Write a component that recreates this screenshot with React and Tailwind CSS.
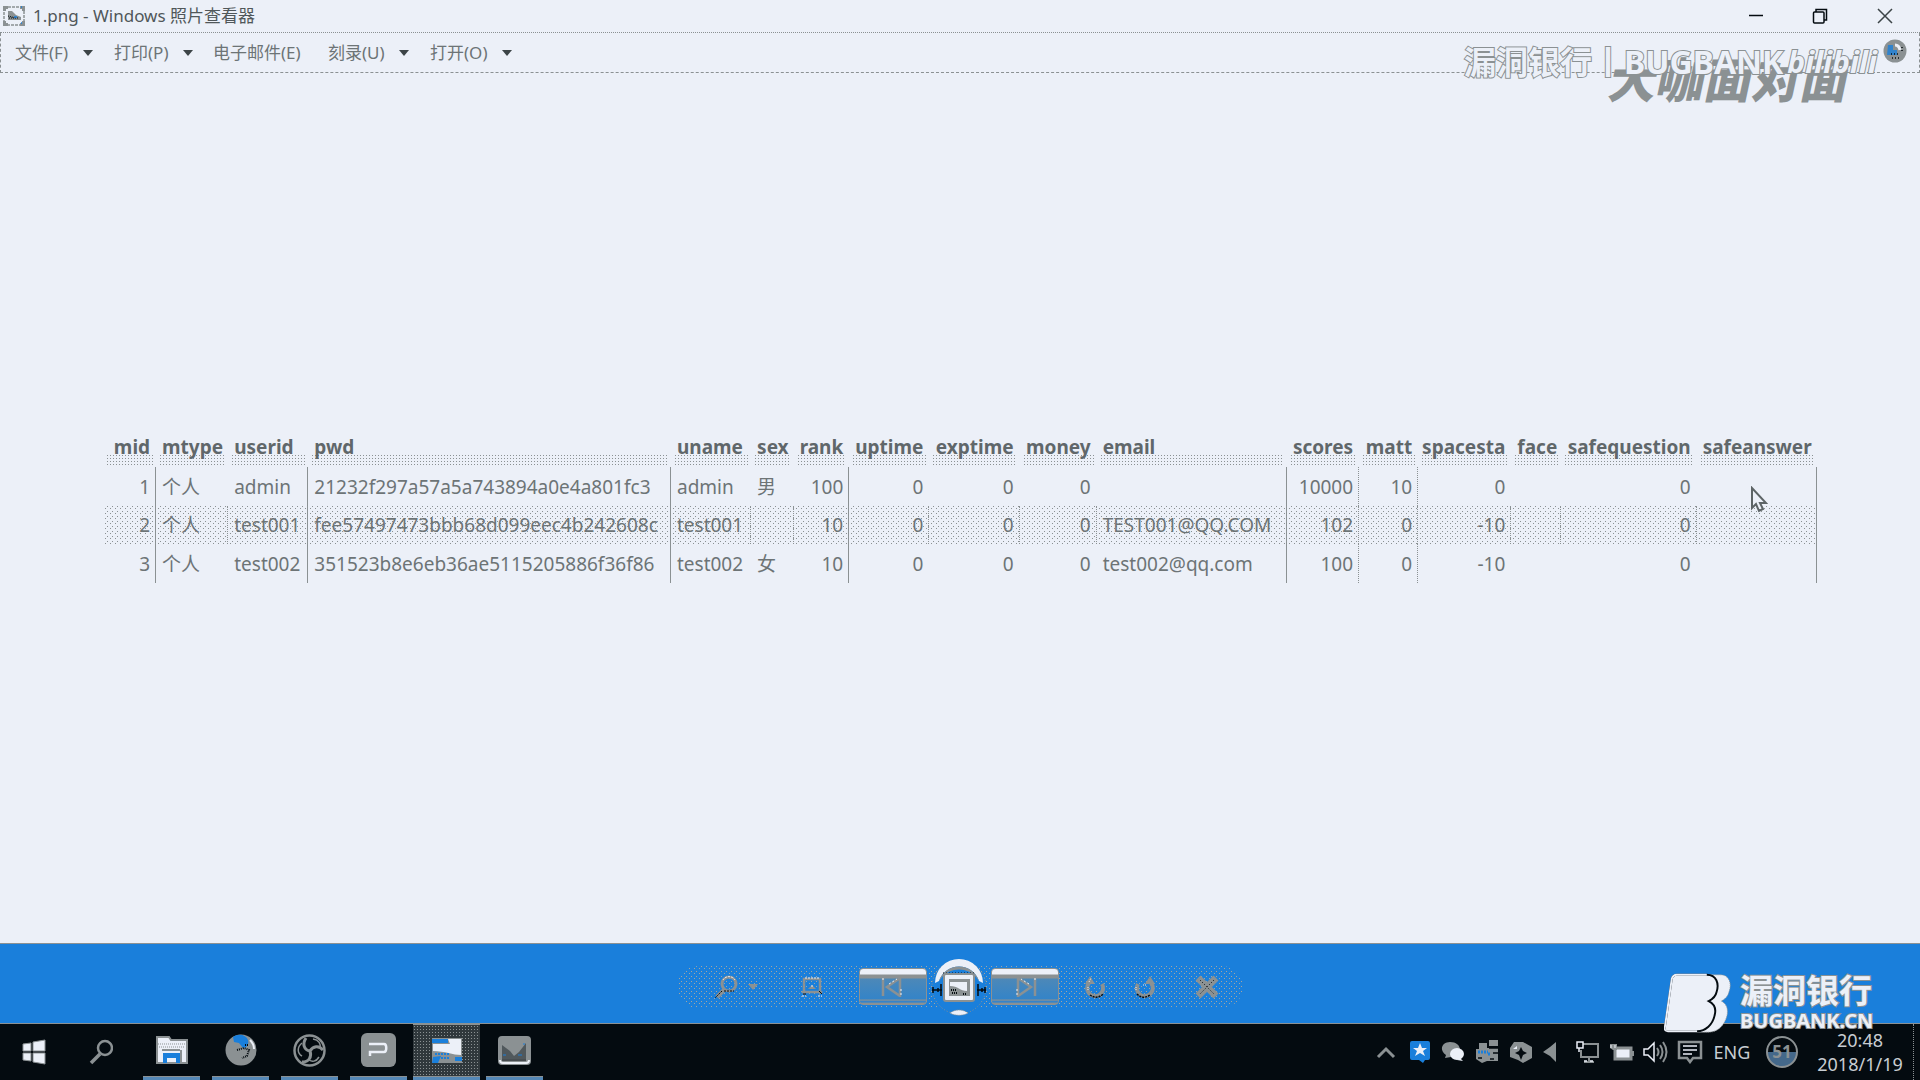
import React from "react";

const FONT = "font-['Noto_Sans','Noto_Sans_CJK_SC',sans-serif]";
const DOTS =
  "bg-[radial-gradient(circle,#8b9193,transparent_1px),radial-gradient(circle,#8b9193,transparent_1px)] bg-[length:5px_5px] bg-[position:0_0,2px_3px]";
const PILL_DOTS =
  "bg-[radial-gradient(circle,#a3a5a2,transparent_1px),radial-gradient(circle,#a3a5a2,transparent_1px)] bg-[length:5px_5px] bg-[position:0_0,2px_3px]";
const DENSE =
  "bg-[radial-gradient(circle,#8b9193,transparent_1px)] bg-[length:3px_3px]";
const G = "#8b9193";
const W = "#ecf0f8";
const B = "#1a7fdb";
const K = "#040b10";

const columns = [
  { name: "mid", w: 53, right: true },
  { name: "mtype", w: 72 },
  { name: "userid", w: 80 },
  { name: "pwd", w: 362 },
  { name: "uname", w: 80 },
  { name: "sex", w: 43 },
  { name: "rank", w: 55, right: true },
  { name: "uptime", w: 80, right: true },
  { name: "exptime", w: 90, right: true },
  { name: "money", w: 77, right: true },
  { name: "email", w: 190 },
  { name: "scores", w: 72, right: true },
  { name: "matt", w: 59, right: true },
  { name: "spacesta", w: 93, right: true },
  { name: "face", w: 50 },
  { name: "safequestion", w: 135, right: true },
  { name: "safeanswer", w: 120 },
];
const total = columns.reduce((s, c) => s + c.w, 0);

const rows = [
  ["1", "个人", "admin", "21232f297a57a5a743894a0e4a801fc3", "admin", "男", "100", "0", "0", "0", "", "10000", "10", "0", "", "0", ""],
  ["2", "个人", "test001", "fee57497473bbb68d099eec4b242608c", "test001", "", "10", "0", "0", "0", "TEST001@QQ.COM", "102", "0", "-10", "", "0", ""],
  ["3", "个人", "test002", "351523b8e6eb36ae5115205886f36f86", "test002", "女", "10", "0", "0", "0", "test002@qq.com", "100", "0", "-10", "", "0", ""],
];
const solid = [0, 3, 6, 10, 16];
const dotted = [11, 12];

function cellBorder(r, c) {
  if (solid.includes(c)) return "border-r border-solid border-[#8b9193]";
  if (dotted.includes(c) || (r === 1 && c !== 2)) return "border-r border-dotted border-[#8b9193]";
  if (c === 2) return "border-r border-solid border-[#8b9193]";
  return "border-r border-transparent";
}

function TitleBar() {
  return (
    <header className="flex h-[33px] items-center border-b border-dotted border-[#8b9193]">
      <svg className="ml-[3px] h-[20px] w-[22px]" viewBox="0 0 22 20" fill="none">
        <rect x="1" y="1" width="20" height="18" stroke={G} strokeWidth="1.5" strokeDasharray="3 1" />
        <path d="M0 0h5v3H3v2H0zM17 0h5v5h-3V3h-2zM0 15h3v2h2v3H0zM19 15h3v5h-5v-3h2z" fill={G} />
        <path d="M5 5h4l4 4 5 2v3H5z" fill={G} />
        <path d="M5 10l8 2M6 12h9" stroke={K} strokeDasharray="1 1" />
        <path d="M18 1h1M18 17h1M11 11h3" stroke={B} strokeWidth="1.5" />
      </svg>
      <h1 className="ml-[8px] flex-1 text-[17px] leading-6 text-[#50575a]">1.png - Windows 照片查看器</h1>
      <button aria-label="Minimize" className="flex h-8 w-16 items-center justify-center">
        <svg className="h-4 w-4" viewBox="0 0 16 16"><path d="M1 7.5h14" stroke={K} strokeWidth="1.5" /></svg>
      </button>
      <button aria-label="Restore" className="flex h-8 w-16 items-center justify-center">
        <svg className="h-4 w-4" viewBox="0 0 16 16" fill="none" stroke={K}>
          <rect x="1.5" y="4" width="10.5" height="11" rx="1" strokeWidth="1.5" />
          <path d="M4 4V1.5h10.500V12H12" strokeWidth="1.5" />
        </svg>
      </button>
      <button aria-label="Close" className="mr-[2px] flex h-8 w-[66px] items-center justify-center">
        <svg className="h-4 w-4" viewBox="0 0 16 16"><path d="M1 1l14 14M15 1L1 15" stroke="#3c4447" strokeWidth="1.5" /></svg>
      </button>
    </header>
  );
}

function MenuItem({ label, arrow, className }) {
  return (
    <button className={"flex items-center whitespace-nowrap " + className}>
      <span className="flex-1 text-left">{label}</span>
      {arrow && (
        <svg className="h-[6px] w-[10px]" viewBox="0 0 10 6"><path d="M0 0h10L5 6z" fill="#3c4447" /></svg>
      )}
    </button>
  );
}

function MenuBar() {
  return (
    <nav className="flex h-[40px] items-center border-x border-b border-dashed border-[#8b9193] pl-[14px] text-[17px] leading-6 text-[#6d7476]">
      <MenuItem label="文件(F)" arrow className="mr-[21px] w-[78px]" />
      <MenuItem label="打印(P)" arrow className="mr-[20px] w-[79px]" />
      <MenuItem label="电子邮件(E)" className="mr-[21px] w-[94px]" />
      <MenuItem label="刻录(U)" arrow className="mr-[21px] w-[81px]" />
      <MenuItem label="打开(O)" arrow className="w-[82px]" />
      <button aria-label="Help" className="mr-[12px] mb-[4px] ml-auto">
        <svg className="h-[24px] w-[24px]" viewBox="0 0 24 24">
          <circle cx="12" cy="12" r="11.5" fill={G} />
          <path d="M5 6h5v5h4v5H4z" fill={B} opacity="0.8" />
          <path d="M12 6q4 0 5 5" stroke={W} strokeWidth="3" fill="none" />
          <path d="M9 19h8M8 15h9M19 8v6" stroke={K} strokeWidth="1.5" strokeDasharray="1 2" />
        </svg>
      </button>
    </nav>
  );
}

function Watermark() {
  return (
    <div className="pointer-events-none absolute top-[40px] right-[36px] h-[70px] w-[420px] whitespace-nowrap">
      <div className="absolute top-[10px] left-[146px] -skew-x-12 text-[48px] leading-[60px] font-black text-[#8b9193]">大咖面对面</div>
      <div className="absolute top-[2px] left-0 flex items-center text-[32px] leading-[40px] font-bold text-[#ecf0f8] [paint-order:stroke] [-webkit-text-stroke:2px_#8b9193]">
        <span>漏洞银行丨BUGBANK</span>
        <span className="ml-1 text-[30px] italic">bilibili</span>
      </div>
    </div>
  );
}

function DataTable() {
  return (
    <table className="w-full table-fixed border-separate border-spacing-0 text-[19px] leading-6 text-[#6d7476]">
      <colgroup>
        {columns.map((c) => (
          <col key={c.name} style={{ width: `${(c.w / total) * 100}%` }} />
        ))}
      </colgroup>
      <thead>
        <tr className="h-[34px]">
          {columns.map((c) => (
            <th key={c.name} scope="col" className={"relative p-0 pt-[2px] align-top font-bold whitespace-nowrap text-[#60676a] " + (c.right ? "pr-[6px] text-right" : "pl-[6px] text-left")}>
              <span className={"absolute inset-x-[3px] bottom-px h-[12px] " + DENSE} />
              <span className="relative">{c.name}</span>
            </th>
          ))}
        </tr>
      </thead>
      <tbody>
        {rows.map((row, r) => (
          <tr key={row[0]} className={r === 1 ? "h-[38px]" : "h-[39px]"}>
            {row.map((v, c) => (
              <td key={c} className={"p-0 whitespace-nowrap " + (columns[c].right ? "pr-[5px] text-right " : "pl-[6px] ") + cellBorder(r, c) + (r === 1 ? " " + DOTS : "")}>
                {v}
              </td>
            ))}
          </tr>
        ))}
      </tbody>
    </table>
  );
}

function SideButton({ label, children }) {
  return (
    <button aria-label={label} className="flex h-[37px] flex-1 items-center justify-center rounded-[4px] border border-[#8b9193] bg-[linear-gradient(#ecf0f8_0,#ecf0f8_5px,#8b9193_6px,#8b9193_9px,#4c88b8_10px,#3484c8_30px,#8b9193_31px,#1a7fdb_33px,#8b9193_34px)]">
      {children}
    </button>
  );
}

function Controls() {
  return (
    <div className="flex h-[81px] items-center justify-center border-y border-[#8b9193] bg-[#1a7fdb]">
      <div className={"mt-[6px] flex h-[42px] w-[566px] items-center rounded-full " + PILL_DOTS}>
        <button aria-label="Zoom" className="ml-[36px] flex w-[84px] items-center gap-[8px]">
          <svg className="h-[24px] w-[26px]" viewBox="0 0 26 24" fill="none">
            <circle cx="16" cy="9" r="7" stroke={G} strokeWidth="3" />
            <path d="M10 5a7 7 0 0112 0" stroke={W} strokeDasharray="2 1" />
            <path d="M11 15l-7 7" stroke={G} strokeWidth="4" />
            <path d="M9 16l-7 7M11 16h10" stroke={K} strokeDasharray="2 1" />
          </svg>
          <svg className="h-[8px] w-[12px]" viewBox="0 0 12 8"><path d="M1 1h10L6 7z" fill={G} /></svg>
        </button>
        <button aria-label="Fit to window" className="ml-[3px] flex w-[24px] justify-center">
          <svg className="h-[22px] w-[24px]" viewBox="0 0 24 22" fill="none">
            <rect x="4" y="3" width="16" height="13" stroke={G} strokeWidth="2.5" />
            <path d="M8 13l4-4 4 4zM1 16l4-3v6zM23 16l-4-3v6z" fill={G} />
            <path d="M5 2h14M11 10h2M2 20h4M18 20h4" stroke={W} strokeDasharray="2 1" />
            <path d="M3 18h3M19 15l3 3" stroke={K} />
          </svg>
        </button>
        <div className="ml-[35px] flex w-[200px] items-center gap-[3px]">
          <SideButton label="Previous">
            <svg className="h-[20px] w-[24px]" viewBox="0 0 24 20" fill="none">
              <path d="M2 1v18M6 10L19 1v18z" stroke={G} strokeWidth="2.5" />
              <path d="M2 1v4M8 7l8-5M20 12v6" stroke={W} strokeDasharray="2 2" />
            </svg>
          </SideButton>
          <button aria-label="Play slide show" className="relative flex h-[58px] w-[58px] items-center justify-center">
            <svg className="h-[62px] w-[58px] shrink-0" viewBox="0 0 58 62" fill="none">
              <circle cx="29" cy="31" r="27" fill={B} stroke={G} strokeDasharray="1 2" />
              <path d="M5 27A24 24 0 0153 27L49 25A21 21 0 009 25z" fill={W} />
              <path d="M9 25A21 21 0 0149 25L46 21A21 18 0 0012 21z" fill={G} />
              <path d="M13 17h32" stroke={K} strokeDasharray="1 2" />
              <path d="M2 34h10M3 31v6M8 32v4M11 28v12M47 34h9M48 28v12M52 32v4M55 31v6" stroke={K} strokeWidth="1.5" />
              <rect x="14" y="18" width="30" height="27" rx="2" fill={W} stroke={G} strokeWidth="2" />
              <rect x="19" y="23" width="21" height="17" fill={G} />
              <path d="M20 26h17v9c-7 0-9-5-17-5z" fill={W} />
              <path d="M21 34h5M22 37h5M33 38h4" stroke={K} strokeDasharray="1 1" strokeWidth="2" />
              <path d="M20 57c5-4 13-4 18 0-5 3-13 3-18 0z" fill={W} stroke={G} strokeDasharray="1 1" />
            </svg>
          </button>
          <SideButton label="Next">
            <svg className="h-[20px] w-[24px]" viewBox="0 0 24 20" fill="none">
              <path d="M22 1v18M18 10L5 1v18z" stroke={G} strokeWidth="2.5" />
              <path d="M22 1v4M16 7L8 2M4 12v6" stroke={W} strokeDasharray="2 2" />
            </svg>
          </SideButton>
        </div>
        <button aria-label="Rotate counterclockwise" className="ml-[26px]">
          <svg className="h-[24px] w-[22px]" viewBox="0 0 22 24" fill="none">
            <path d="M4 8a8 8 0 1013 1" stroke={G} strokeWidth="4" />
            <path d="M0 9l5-8 5 8z" fill={G} />
            <path d="M5 20c4 3 9 3 13-1" stroke={K} strokeDasharray="2 1" strokeWidth="1.5" />
            <path d="M4 7l2-4M3 12v3" stroke={W} strokeDasharray="1 1" />
          </svg>
        </button>
        <button aria-label="Rotate clockwise" className="ml-[26px]">
          <svg className="h-[24px] w-[22px]" viewBox="0 0 22 24" fill="none">
            <path d="M18 8A8 8 0 115 9" stroke={G} strokeWidth="4" />
            <path d="M22 9l-5-8-5 8z" fill={G} />
            <path d="M4 19c4 4 9 4 13 1" stroke={K} strokeDasharray="2 1" strokeWidth="1.5" />
            <path d="M3 12v4M10 10h4" stroke={W} strokeDasharray="1 1" />
          </svg>
        </button>
        <button aria-label="Delete" className="ml-[40px]">
          <svg className="h-[24px] w-[24px]" viewBox="0 0 24 24" fill="none">
            <path d="M3 3l18 18M21 3L3 21" stroke={G} strokeWidth="7" />
            <path d="M5 5l14 14M19 5L5 19" stroke={K} strokeDasharray="1 2" />
          </svg>
        </button>
      </div>
    </div>
  );
}

function Brand() {
  return (
    <div className="pointer-events-none absolute right-[45px] bottom-[46px] flex items-start whitespace-nowrap">
      <svg className="h-[62px] w-[70px]" viewBox="0 0 72 62">
        <path d="M46 2h12c9 0 12 9 9 17-1 5-4 8-8 10 5 3 7 7 6 14-2 10-9 18-19 18H34z" fill={W} stroke={G} strokeDasharray="1 1" />
        <path d="M13 2h31c10 0 13 9 10 18-1 5-4 7-8 9 6 3 8 8 6 15-2 9-9 16-18 16H4c-3 0-4-2-3-5L8 6c1-3 2-4 5-4z" fill={W} stroke={K} strokeWidth="2" />
        <path d="M34 60H4c-3 0-4-2-3-5L8 6c1-3 2-4 5-4h31" fill="none" stroke={W} strokeWidth="2" />
      </svg>
      <div className="ml-[6px] w-[135px] font-bold text-[#ecf0f8] [paint-order:stroke] [-webkit-text-stroke:2px_#8b9193]">
        <div className="text-[33px] leading-[38px]">漏洞银行</div>
        <div className="text-[20px] leading-[22px]">BUGBANK.CN</div>
      </div>
    </div>
  );
}

function Task({ label, active, running = true, children }) {
  return (
    <button
      aria-label={label}
      className={
        "flex h-[56px] flex-col items-center justify-between " +
        (active ? "w-[67px] border-t border-[#8b9193] bg-[#30383c] bg-[radial-gradient(circle,#8b9193,transparent_1px)] bg-[length:3px_3px]" : "w-[57px]")
      }
    >
      <span className={"flex items-center " + (active ? "h-[50px]" : "h-[52px]")}>{children}</span>
      <span className={"h-[4px] w-full " + (running ? "border-t border-[#8b9193] bg-[#5488b7]" : "")} />
    </button>
  );
}

function TaskBar() {
  return (
    <footer className="flex h-[56px] items-center bg-[#040b10] text-[#c8cdd2]">
      <button aria-label="Start" className="ml-[22px]">
        <svg className="h-[26px] w-[24px]" viewBox="0 0 24 26" stroke={G} fill={W}>
          <path d="M1 5l8-1v8H1zM11 3l12-2v11H11zM1 14h8v8l-8-1zM11 14h12v11l-12-2z" />
        </svg>
      </button>
      <button aria-label="Search" className="ml-[43px]">
        <svg className="h-[26px] w-[24px]" viewBox="0 0 24 26" fill="none" stroke={G}>
          <circle cx="16" cy="9" r="7" strokeWidth="2.5" /><path d="M11 15L2 24" strokeWidth="3.5" />
        </svg>
      </button>
      <div className="ml-[30px] flex items-center gap-[12px]">
        <Task label="File Explorer">
          <svg className="h-[28px] w-[32px]" viewBox="0 0 32 28">
            <path d="M1 1h12l2 3h16v23H1z" fill={W} stroke={G} strokeWidth="2" />
            <path d="M2 8h28M3 11h26" stroke={G} strokeDasharray="1 1" />
            <path d="M7 27V17h17v10h-4v-5h-9v5z" fill={B} /><path d="M25 14v13M6 14h18" stroke={G} strokeWidth="2" />
          </svg>
        </Task>
        <Task label="Firefox">
          <svg className="h-[32px] w-[32px]" viewBox="0 0 32 32">
            <circle cx="16" cy="16" r="15.5" fill={G} />
            <path d="M8 3c6-4 13-2 15 3 1 4-1 8-5 8l-4-5-5-1z" fill={B} />
            <path d="M12 16l7-2 5 2-2 6-5 2M20 11h4" stroke={K} strokeDasharray="1 1" strokeWidth="2" fill="none" />
            <path d="M25 6c3 3 4 6 4 9" stroke={W} strokeWidth="2" fill="none" />
          </svg>
        </Task>
        <Task label="OBS Studio">
          <svg className="h-[33px] w-[33px]" viewBox="0 0 33 33" fill="none" stroke={G}>
            <circle cx="16.5" cy="16.5" r="15" strokeWidth="2.5" />
            <path d="M17 17c-6-1-8-7-4-13M17 17c3-5 9-6 13-1M17 17c2 6-1 11-8 11" strokeWidth="3" />
            <path d="M9 9c-5 4-5 10 0 13M20 5c6 1 8 5 7 9M26 23c-3 5-7 5-10 3" strokeWidth="1.5" />
          </svg>
        </Task>
        <Task label="Presentation">
          <svg className="h-[34px] w-[35px]" viewBox="0 0 35 34">
            <rect width="35" height="34" rx="6" fill={G} />
            <path d="M8 11h15c3 0 3 8 0 8H9v4" fill="none" stroke={W} strokeWidth="2.5" />
          </svg>
        </Task>
        <div className="-mx-[6px]">
          <Task label="Windows Photo Viewer" active>
            <svg className="h-[27px] w-[32px]" viewBox="0 0 32 27">
              <rect x="1" y="1" width="30" height="25" fill={G} />
              <path d="M2 7h17l-2-5h13v16c-8 0-16-4-28-4z" fill={W} />
              <path d="M1 2h16v4H1zM2 20l8-1-3 7H1zM24 20h7v4h-7z" fill={B} />
              <path d="M4 17h14M10 21h9" stroke={B} strokeDasharray="2 1" strokeWidth="2" />
            </svg>
          </Task>
        </div>
        <Task label="Monitor">
          <svg className="h-[29px] w-[33px]" viewBox="0 0 33 29">
            <rect width="33" height="29" rx="4" fill={G} />
            <path d="M4 9l8 6 4 5 5-4 7-9v16H4z" fill="#50585c" />
            <path d="M4 24h24" stroke={K} />
            <path d="M2 24c0 2 1 3 3 3h23c2 0 3-1 3-3" fill="none" stroke={W} strokeWidth="2" />
            <path d="M5 19h3M25 8h2M20 19h4" stroke={B} />
          </svg>
        </Task>
      </div>
      <div className="mr-[6px] ml-auto flex items-center">
        <button aria-label="Show hidden icons" className="mr-[13px]">
          <svg className="h-[14px] w-[20px]" viewBox="0 0 20 14" fill="none" stroke={G} strokeWidth="3"><path d="M2 12l8-8 8 8" /></svg>
        </button>
        <div className="mr-[20px] flex items-center gap-[10px]">
          <svg className="h-[24px] w-[22px]" viewBox="0 0 22 24">
            <path d="M3 1h16q2 0 2 2v15q0 2-2 2h-3l-2 3-4-3H3q-2 0-2-2V3q0-2 2-2z" fill={B} />
            <path d="M11 3l2 5h5l-4 3 2 5-5-3-5 3 2-5-4-3h5z" fill={W} />
          </svg>
          <svg className="h-[20px] w-[24px]" viewBox="0 0 24 20">
            <path d="M9 0c6 0 10 3 10 8s-4 7-9 7l-6 1 1-3C-3 7 2 0 9 0z" fill={G} />
            <ellipse cx="16" cy="12" rx="7" ry="6" fill={W} /><path d="M19 16l3 3-6-1z" fill={W} />
          </svg>
          <svg className="h-[24px] w-[24px]" viewBox="0 0 24 24">
            <path d="M4 3h8v5h11v13H12l-5 2-6-4V9h3zM14 0h9v6h-9z" fill={G} />
            <path d="M3 12h10M13 14h3" stroke={B} strokeWidth="3" strokeDasharray="2 1" />
            <path d="M3 18h4M14 8h9M15 19h4M18 13h5" stroke={K} strokeWidth="1.5" />
          </svg>
          <svg className="h-[23px] w-[24px]" viewBox="0 0 24 23">
            <path d="M5 1h9l9 5v11l-9 5-5-3-8-3V7z" fill={G} />
            <path d="M12 6l2 4 4 2-4 2-2 5-2-5-4-2 4-2z" fill={K} />
            <path d="M4 8l4-3v3z" fill={W} />
          </svg>
          <svg className="h-[20px] w-[13px]" viewBox="0 0 13 20"><path d="M13 0v20L7 14 0 10l7-5z" fill={G} /></svg>
        </div>
        <div className="mr-[10px] flex items-center gap-[9px]">
          <svg className="h-[22px] w-[24px]" viewBox="0 0 24 22" fill="none" stroke={W}>
            <path d="M7 3h15v13H5V9M13 16v4M8 21h10" stroke={G} strokeWidth="2" />
            <path d="M1 1h6v6H1zM3 7v4M8 20h3M14 20h3" strokeWidth="1.5" />
          </svg>
          <svg className="h-[18px] w-[25px]" viewBox="0 0 25 18">
            <rect x="6" y="5" width="16" height="11" fill={W} stroke={G} strokeWidth="3" />
            <path d="M22 8h3v5h-3zM1 1h7v6H4L1 5z" fill={G} /><path d="M2 2v3M6 2v3" stroke={W} />
          </svg>
          <svg className="h-[22px] w-[25px]" viewBox="0 0 25 22" fill="none" stroke={G} strokeWidth="2">
            <path d="M1 8h4l6-6v18l-6-6H1z" stroke={W} strokeWidth="1.5" />
            <path d="M14 7q3 4 0 8M17 4q5 7 0 14M20 1q7 10 0 20" />
          </svg>
          <svg className="h-[24px] w-[26px]" viewBox="0 0 26 24" fill="none">
            <path d="M2 2h22v16h-8l-3 4-3-4H2z" stroke={G} strokeWidth="2.5" />
            <path d="M6 6h14M6 10h14M6 14h9" stroke={W} strokeWidth="1.5" />
          </svg>
        </div>
        <button className="mr-[15px] w-[38px] text-[18px] leading-6">ENG</button>
        <div className="mr-[18px] flex h-[32px] w-[32px] items-center justify-center rounded-full border-2 border-[#8b9193] bg-[linear-gradient(#040b10_50%,#44688a_50%)] text-[17px] font-bold text-[#8b9193]">51</div>
        <div className="w-[88px] text-center text-[18px] leading-[24px] whitespace-nowrap">
          <div>20:48</div>
          <div>2018/1/19</div>
        </div>
        <div className="ml-[9px] h-[56px] border-l border-dotted border-[#8b9193]" />
      </div>
    </footer>
  );
}

export default function App() {
  return (
    <div className={"relative flex min-h-screen flex-col overflow-hidden bg-[#ecf0f8] " + FONT}>
      <TitleBar />
      <MenuBar />
      <Watermark />
      <main className="relative flex flex-1 flex-col justify-center px-[103px]">
        <DataTable />
        <svg className="absolute top-[413px] right-[152px] h-[28px] w-[18px]" viewBox="0 0 18 28">
          <path d="M2 2v20l4-4 3 7 4-2-3-6h6z" fill={W} stroke="#5d6466" strokeWidth="2" />
        </svg>
      </main>
      <Controls />
      <TaskBar />
      <Brand />
    </div>
  );
}
